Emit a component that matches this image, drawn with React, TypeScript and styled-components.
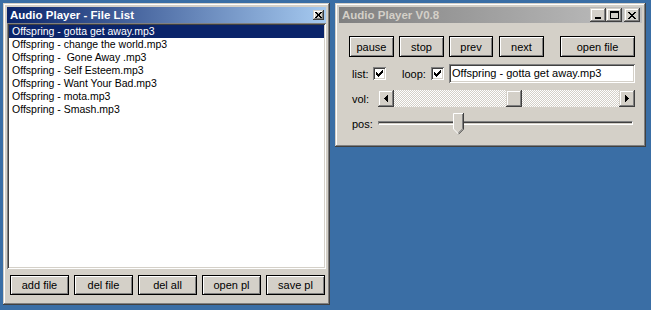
import * as React from 'react';
import styled, { createGlobalStyle } from 'styled-components';

const GlobalStyle = createGlobalStyle`
	html, body {
		margin: 0;
		padding: 0;
	}
	body {
		width: 651px;
		height: 310px;
		overflow: hidden;
		background: #3a6ea5;
		font-family: "Liberation Sans", Arial, sans-serif;
		font-size: 11px;
		color: #000;
	}
`;

const raised = `
	box-shadow: inset -1px -1px #404040, inset 1px 1px #d4d0c8, inset -2px -2px #808080, inset 2px 2px #fff;
`;

const sunken = `
	box-shadow: inset 1px 1px #808080, inset -1px -1px #fff, inset 2px 2px #404040, inset -2px -2px #d4d0c8;
`;

const Desktop = styled.div`
	display: flex;
	align-items: flex-start;
	padding: 3px 0 0 3px;
`;

const Window = styled.div<{ $w: number; $h: number; $gap?: number }>`
	box-sizing: border-box;
	width: ${p => p.$w}px;
	height: ${p => p.$h}px;
	margin-left: ${p => p.$gap || 0}px;
	padding: 4px;
	background: #d4d0c8;
	display: flex;
	flex-direction: column;
	${raised}
`;

const TitleBar = styled.div<{ $active?: boolean }>`
	height: 16px;
	flex: none;
	display: flex;
	align-items: center;
	padding: 0 2px 0 3px;
	background: ${p => p.$active
		? 'linear-gradient(to right, #0a246a, #a6caf0)'
		: 'linear-gradient(to right, #808080, #c0c0c0)'};
	color: ${p => (p.$active ? '#fff' : '#d4d0c8')};
	font-weight: bold;
	font-size: 11.5px;
`;

const TitleText = styled.span`
	flex: 1;
	white-space: nowrap;
`;

const TitleButtons = styled.div`
	display: flex;
	align-items: center;
`;

const CapButton = styled.div<{ $w: number; $h: number; $ml?: number }>`
	box-sizing: border-box;
	width: ${p => p.$w}px;
	height: ${p => p.$h}px;
	margin-left: ${p => p.$ml || 0}px;
	background: #d4d0c8;
	display: flex;
	align-items: center;
	justify-content: center;
	${raised}
`;

/* --- file list window --- */

const ListBox = styled.div`
	flex: 1;
	box-sizing: border-box;
	padding: 2px;
	background: #fff;
	${sunken}
`;

const ListItem = styled.div<{ $selected?: boolean }>`
	height: 13px;
	line-height: 13px;
	padding-left: 3px;
	font-size: 10.5px;
	white-space: pre;
	background: ${p => (p.$selected ? '#0a246a' : 'transparent')};
	color: ${p => (p.$selected ? '#fff' : '#000')};
`;

const ListButtons = styled.div`
	display: flex;
	gap: 5px;
	padding: 6px 0 6px 3px;
`;

const Button = styled.div<{ $w: number; $h?: number; $ml?: number }>`
	box-sizing: border-box;
	width: ${p => p.$w}px;
	height: ${p => p.$h || 20}px;
	margin-left: ${p => p.$ml || 0}px;
	display: flex;
	align-items: center;
	justify-content: center;
	background: #d4d0c8;
	border: 1px solid #000;
	box-shadow: inset 1px 1px #fff, inset -1px -1px #808080;
	font-size: 11px;
	white-space: nowrap;
`;

/* --- player window --- */

const Panel = styled.div`
	display: flex;
	flex-direction: column;
	padding: 13px 7px 0 10px;
`;

const Row = styled.div<{ $mt: number; $h: number }>`
	display: flex;
	align-items: center;
	margin-top: ${p => p.$mt}px;
	height: ${p => p.$h}px;
`;

const Spacer = styled.div`
	flex: 1;
`;

const Label = styled.span<{ $w: number }>`
	box-sizing: border-box;
	width: ${p => p.$w}px;
	padding-left: 3px;
	flex: none;
	font-size: 11px;
`;

const CheckBox = styled.div<{ $mr?: number }>`
	box-sizing: border-box;
	width: 13px;
	height: 13px;
	flex: none;
	margin-right: ${p => p.$mr || 0}px;
	background: #fff;
	display: flex;
	align-items: center;
	justify-content: center;
	${sunken}
`;

const TextField = styled.div`
	flex: 1;
	box-sizing: border-box;
	height: 19px;
	margin-left: 5px;
	padding: 0 3px;
	background: #fff;
	line-height: 19px;
	font-size: 11px;
	white-space: nowrap;
	${sunken}
`;

const ScrollBar = styled.div`
	flex: 1;
	height: 17px;
	display: flex;
`;

const ScrollTrack = styled.div`
	position: relative;
	flex: 1;
	background-color: #fff;
	background-image: repeating-conic-gradient(#d4d0c8 0 25%, #fff 0 50%);
	background-size: 2px 2px;
`;

const ScrollThumb = styled.div`
	position: absolute;
	top: 0;
	width: 16px;
	height: 17px;
	box-sizing: border-box;
	background: #d4d0c8;
	${raised}
`;

const Slider = styled.div`
	position: relative;
	flex: 1;
	height: 22px;
	margin-right: 2px;
`;

const Groove = styled.div`
	position: absolute;
	left: 0;
	right: 0;
	top: 8px;
	height: 4px;
	box-sizing: border-box;
	border-top: 1px solid #808080;
	border-left: 1px solid #808080;
	border-bottom: 1px solid #fff;
	border-right: 1px solid #fff;
	box-shadow: inset 0 1px #404040;
`;

const SliderThumb = styled.svg`
	position: absolute;
	top: 0;
`;

const CloseGlyph = ({ size = 8 }: { size?: number }) => (
	<svg width={size} height={size - 1} viewBox="0 0 8 7" shapeRendering="crispEdges">
		<path d="M0 0h2v1h-2zM6 0h2v1h-2zM1 1h2v1h-2zM5 1h2v1h-2zM2 2h4v1h-4zM3 3h2v1h-2zM2 4h4v1h-4zM1 5h2v1h-2zM5 5h2v1h-2zM0 6h2v1h-2zM6 6h2v1h-2z" fill="#000" />
	</svg>
);

const Check = () => (
	<svg width="7" height="7" viewBox="0 0 7 7" shapeRendering="crispEdges">
		<path d="M6 0h1v3h-1zM5 1h1v3h-1zM4 2h1v3h-1zM3 3h1v3h-1zM2 4h1v3h-1zM1 3h1v3h-1zM0 2h1v3h-1z" fill="#000" />
	</svg>
);

const Arrow = ({ dir }: { dir: 'left' | 'right' }) => (
	<svg width="4" height="7" viewBox="0 0 4 7" shapeRendering="crispEdges">
		{dir === 'left'
			? <path d="M3 0h1v7h-1zM2 1h1v5h-1zM1 2h1v3h-1zM0 3h1v1h-1z" fill="#000" />
			: <path d="M0 0h1v7h-1zM1 1h1v5h-1zM2 2h1v3h-1zM3 3h1v1h-1z" fill="#000" />}
	</svg>
);

const files = [
	'Offspring - gotta get away.mp3',
	'Offspring - change the world.mp3',
	'Offspring -  Gone Away .mp3',
	'Offspring - Self Esteem.mp3',
	'Offspring - Want Your Bad.mp3',
	'Offspring - mota.mp3',
	'Offspring - Smash.mp3',
];

const listButtons = ['add file', 'del file', 'del all', 'open pl', 'save pl'];

const transport = [
	{ label: 'pause', w: 45, gap: 0 },
	{ label: 'stop', w: 45, gap: 5 },
	{ label: 'prev', w: 44, gap: 5 },
	{ label: 'next', w: 45, gap: 6 },
];

export default function App() {
	const volume = 0.54;
	const position = 0.31;
	const trackWidth = 224;
	const sliderWidth = 252;

	return (
		<>
			<GlobalStyle />
			<Desktop>
				<Window $w={327} $h={302}>
					<TitleBar $active>
						<TitleText>Audio Player - File List</TitleText>
						<TitleButtons>
							<CapButton $w={11} $h={10}>
								<CloseGlyph size={7} />
							</CapButton>
						</TitleButtons>
					</TitleBar>
					<ListBox>
						{files.map((f, i) => (
							<ListItem key={i} $selected={i === 0}>{f}</ListItem>
						))}
					</ListBox>
					<ListButtons>
						{listButtons.map(b => (
							<Button key={b} $w={59}>{b}</Button>
						))}
					</ListButtons>
				</Window>

				<Window $w={311} $h={144} $gap={5}>
					<TitleBar>
						<TitleText>Audio Player V0.8</TitleText>
						<TitleButtons>
							<CapButton $w={16} $h={14}>
								<svg width="6" height="2" style={{ marginTop: 6 }}><rect width="6" height="2" fill="#000" /></svg>
							</CapButton>
							<CapButton $w={16} $h={14}>
								<svg width="9" height="8" shapeRendering="crispEdges">
									<path d="M0 0h9v2h-9zM0 2h1v6h-1zM8 2h1v6h-1zM0 7h9v1h-9z" fill="#000" />
								</svg>
							</CapButton>
							<CapButton $w={16} $h={14} $ml={2}>
								<CloseGlyph />
							</CapButton>
						</TitleButtons>
					</TitleBar>
					<Panel>
						<Row $mt={0} $h={21}>
							{transport.map(t => (
								<Button key={t.label} $w={t.w} $h={21} $ml={t.gap}>{t.label}</Button>
							))}
							<Spacer />
							<Button $w={75} $h={21}>open file</Button>
						</Row>
						<Row $mt={7} $h={19}>
							<Label $w={24}>list:</Label>
							<CheckBox $mr={13}><Check /></CheckBox>
							<Label $w={32}>loop:</Label>
							<CheckBox><Check /></CheckBox>
							<TextField>Offspring - gotta get away.mp3</TextField>
						</Row>
						<Row $mt={7} $h={17}>
							<Label $w={29}>vol:</Label>
							<ScrollBar>
								<CapButton $w={16} $h={17}><Arrow dir="left" /></CapButton>
								<ScrollTrack>
									<ScrollThumb style={{ left: Math.round(volume * (trackWidth - 16)) }} />
								</ScrollTrack>
								<CapButton $w={16} $h={17}><Arrow dir="right" /></CapButton>
							</ScrollBar>
						</Row>
						<Row $mt={6} $h={22}>
							<Label $w={29}>pos:</Label>
							<Slider>
								<Groove />
								<SliderThumb
									width="11"
									height="22"
									viewBox="0 0 11 22"
									style={{ left: Math.round(position * (sliderWidth - 11)) }}
								>
									<path d="M0 0H11V16L5.5 21.5L0 16Z" fill="#d4d0c8" />
									<path d="M0.5 16V0.5H10" stroke="#fff" fill="none" />
									<path d="M0.5 16L5.5 21" stroke="#fff" fill="none" />
									<path d="M10.5 0V16.2L5.5 21.2" stroke="#404040" fill="none" />
									<path d="M9.5 1V15.8L5.5 19.8" stroke="#808080" fill="none" />
								</SliderThumb>
							</Slider>
						</Row>
					</Panel>
				</Window>
			</Desktop>
		</>
	);
}
